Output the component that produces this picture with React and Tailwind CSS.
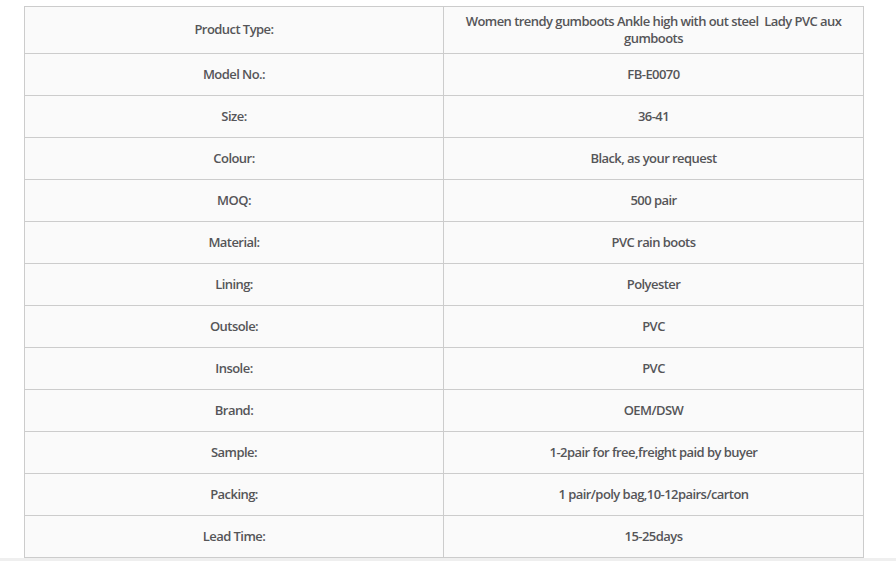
import React from "react";

const rows = [
  ["Product Type:", "Women trendy gumboots Ankle high with out steel\u00a0 Lady PVC aux gumboots"],
  ["Model No.:", "FB-E0070"],
  ["Size:", "36-41"],
  ["Colour:", "Black, as your request"],
  ["MOQ:", "500 pair"],
  ["Material:", "PVC rain boots"],
  ["Lining:", "Polyester"],
  ["Outsole:", "PVC"],
  ["Insole:", "PVC"],
  ["Brand:", "OEM/DSW"],
  ["Sample:", "1-2pair for free,freight paid by buyer"],
  ["Packing:", "1 pair/poly bag,10-12pairs/carton"],
  ["Lead Time:", "15-25days"],
];

export default function App() {
  return (
    <div className="w-[896px] h-[561px] bg-white overflow-hidden flex flex-col">
      <div className="flex-1 pt-[6px] pl-[24px]">
        <table
          className="w-[840px] border-collapse table-fixed text-[13px] font-semibold text-[#555558] leading-[17.5px]"
          style={{ fontFamily: '"Open Sans", "Noto Sans", sans-serif' }}
        >
          <colgroup>
            <col className="w-[419px]" />
            <col className="w-[420px]" />
          </colgroup>
          <tbody>
            {rows.map(([k, v], i) => (
              <tr key={k} className={i === 0 ? "h-[47px]" : "h-[42px]"}>
                <td className="border border-[#cccccc] bg-[#fafafa] text-center align-middle px-[16px] py-[4px] tracking-[-0.55px]">{k}</td>
                <td className="border border-[#cccccc] bg-[#fafafa] text-center align-middle px-[16px] py-[4px] tracking-[-0.55px]">{v}</td>
              </tr>
            ))}
          </tbody>
        </table>
      </div>
      <div className="h-[3px] bg-[#efefef]" />
    </div>
  );
}
